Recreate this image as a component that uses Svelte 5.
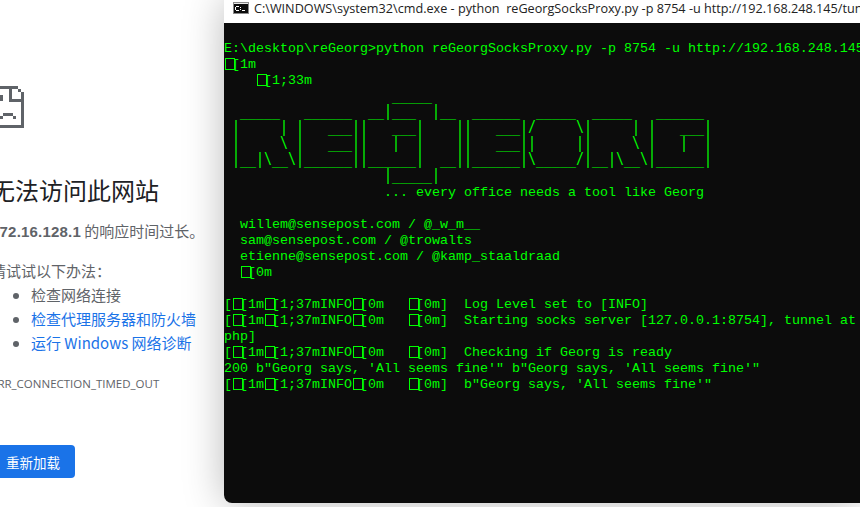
<script>
  // ESC shows up as a box in the console; "~" marks where one goes
  const lines = [
    'E:\\desktop\\reGeorg>python reGeorgSocksProxy.py -p 8754 -u http://192.168.248.145/tunnel.php',
    '~1m',
    '    ~1;33m',
    '                     _____',
    '  _____   ______  __|___  |__  ______  _____  _____   ______',
    ' |     | |   ___||   ___|    ||   ___|/     \\|     | |   ___|',
    ' |     \\ |   ___||   |  |    ||   ___||     ||     \\ |   |  |',
    ' |__|\\__\\|______||______|  __||______|\\_____/|__|\\__\\|______|',
    '                    |_____|',
    '                    ... every office needs a tool like Georg',
    '',
    '  willem@sensepost.com / @_w_m__',
    '  sam@sensepost.com / @trowalts',
    '  etienne@sensepost.com / @kamp_staaldraad',
    '  ~0m',
    '',
    '[~1m~1;37mINFO~0m   ~0m]  Log Level set to [INFO]',
    '[~1m~1;37mINFO~0m   ~0m]  Starting socks server [127.0.0.1:8754], tunnel at',
    'php]',
    '[~1m~1;37mINFO~0m   ~0m]  Checking if Georg is ready',
    `200 b"Georg says, 'All seems fine'" b"Georg says, 'All seems fine'"`,
    `[~1m~1;37mINFO~0m   ~0m]  b"Georg says, 'All seems fine'"`
  ];
</script>

<div class="screen">
  <div class="page">
    <svg class="sad" width="42" height="42" viewBox="-18 86 42 42" shape-rendering="crispEdges" fill="#5f6368">
      <path d="M-18 86h36v3h-36z M18 89h3v3h-3z M21 92h3v36h-3z M-18 125h39v3h-39z M-18 86h3v42h-3z M9 86h3v13h12v3h-15z"/>
      <path d="M0 95h3v6h-3z M3 113h10v3h-10z M0 116h3v3h-3z M13 116h3v3h-3z"/>
    </svg>
    <h1>无法访问此网站</h1>
    <p class="lead"><b>172.16.128.1</b> 的响应时间过长。</p>
    <p class="try">请试试以下办法：</p>
    <ul>
      <li>检查网络连接</li>
      <li><a href="#a">检查代理服务器和防火墙</a></li>
      <li><a href="#b">运行 Windows 网络诊断</a></li>
    </ul>
    <div class="code">ERR_CONNECTION_TIMED_OUT</div>
    <button>重新加载</button>
  </div>

  <div class="window">
    <div class="titlebar">
      <svg class="cmd" width="16" height="12" viewBox="0 0 16 12" shape-rendering="crispEdges">
        <rect width="16" height="12" fill="#8a8a8a"/>
        <rect x="1" y="2" width="14" height="9" fill="#0c0c0c"/>
        <rect x="1" y="1" width="14" height="1" fill="#e8e8e8"/>
        <path d="M3 4h3v1h-3z M2 5h1v3h-1z M3 8h3v1h-3z M7 5h1v1h-1z M7 7h1v1h-1z M9 8h3v1h-3z" fill="#fff"/>
      </svg>
      <span class="title">C:\WINDOWS\system32\cmd.exe - python  reGeorgSocksProxy.py -p 8754 -u http://192.168.248.145/tunnel.php</span>
    </div>
    <div class="console">
      {#each lines as line, n}
        <div class="row" class:art={n >= 3 && n <= 8}>{#each line.split('~') as part, i}{#if i > 0}<span class="esc"></span>[{/if}{part}{/each}</div>
      {/each}
    </div>
  </div>
</div>

<style>
  :global(body) {
    margin: 0;
    background: #fff;
  }

  .screen {
    display: flex;
    width: 860px;
    height: 507px;
    overflow: hidden;
    background: #fff;
  }

  .page {
    flex: 0 0 233px;
    margin-left: -9px;
    box-sizing: border-box;
    padding-top: 86px;
    font-family: "Noto Sans CJK SC", "Liberation Sans", sans-serif;
    font-size: 15px;
    color: #5f6368;
    white-space: nowrap;
  }

  .sad {
    display: block;
    margin-left: -9px;
    margin-bottom: 47px;
  }

  h1 {
    margin: 0 0 14px;
    font-size: 24px;
    line-height: 30px;
    font-weight: 400;
    color: #202124;
  }

  p {
    margin: 0;
    line-height: 24px;
  }

  .lead {
    margin-bottom: 15px;
  }

  .lead b {
    font-family: "Liberation Sans", sans-serif;
    font-size: 15px;
    letter-spacing: 0.2px;
  }

  ul {
    margin: 0;
    padding-left: 40px;
    line-height: 24px;
  }

  a {
    color: #1a73e8;
    text-decoration: none;
  }

  .code {
    margin-top: 17px;
    font-family: "Open Sans", sans-serif;
    font-size: 11.5px;
    line-height: 24px;
  }

  button {
    display: block;
    margin-top: 49px;
    width: 84px;
    height: 33px;
    padding: 0;
    border: 0;
    border-radius: 4px;
    background: #1a73e8;
    color: #fff;
    font: inherit;
    font-size: 13.5px;
  }

  .window {
    flex: 1;
    min-width: 0;
    margin-bottom: 4px;
    display: flex;
    flex-direction: column;
    overflow: hidden;
    border-bottom-left-radius: 8px;
    box-shadow: 0 0 40px rgba(0, 0, 0, 0.28);
    position: relative;
  }

  .titlebar {
    flex: 0 0 23px;
    display: flex;
    align-items: center;
    gap: 5px;
    padding-left: 9px;
    background: #fff;
    white-space: pre;
  }

  .cmd {
    flex-shrink: 0;
    margin-top: -7px;
  }

  .title {
    margin-top: -7px;
    font-family: "Open Sans", sans-serif;
    font-size: 12.65px;
    color: #222;
  }

  .console {
    flex: 1;
    padding-top: 18px;
    background: #0c0c0c;
    color: #0f0;
    font-family: "Liberation Mono", monospace;
    font-size: 13.333px;
    line-height: 16px;
  }

  .row {
    height: 16px;
    white-space: pre;
  }

  /* DejaVu's bar is a full em tall, so the banner's pipes join up; squeezed back to the 8px cell */
  .art {
    font-family: "DejaVu Sans Mono", monospace;
    font-size: 16px;
    transform: translateY(-2px) scaleX(0.8306);
    transform-origin: 0 0;
  }

  .esc {
    display: inline-block;
    box-sizing: border-box;
    width: 10px;
    height: 12px;
    margin: 0 -3px 0 1px;
    border: 1px solid #0f0;
    vertical-align: -2px;
  }
</style>
